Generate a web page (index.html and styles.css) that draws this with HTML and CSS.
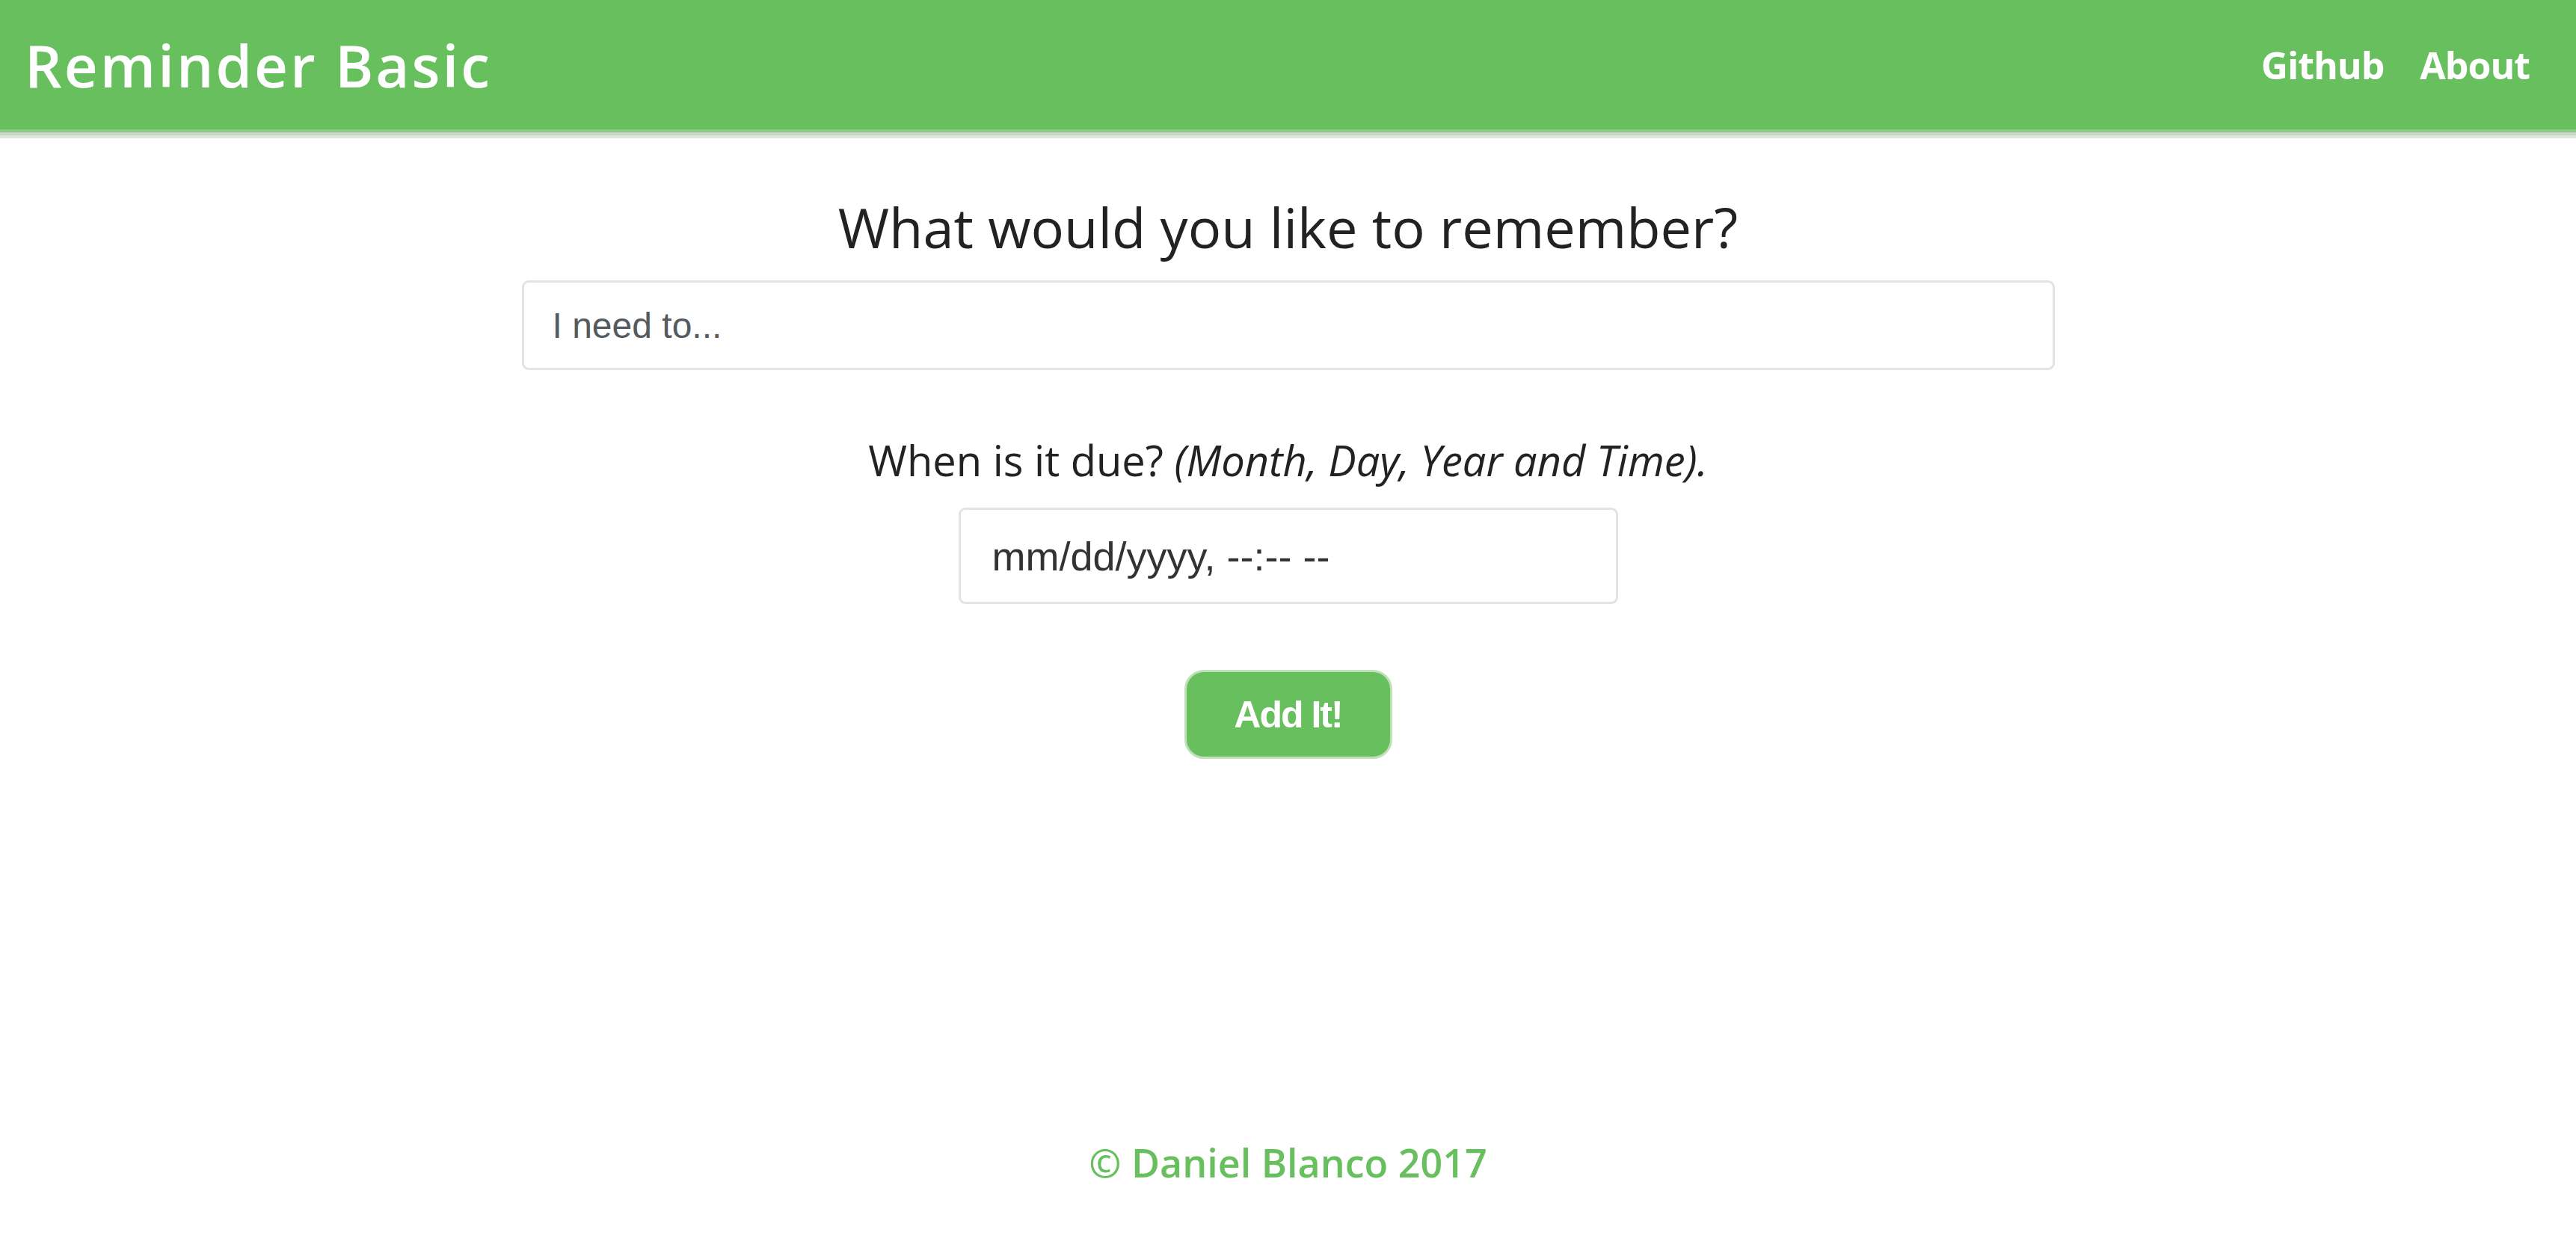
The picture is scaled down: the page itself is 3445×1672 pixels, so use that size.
FILE: index.html
```html
<!DOCTYPE html>
<html lang="en">
<head>
<meta charset="utf-8">
<title>Reminder Basic</title>
<link rel="stylesheet" href="styles.css">
</head>
<body>
<header class="navbar">
  <a class="brand" href="#">Reminder Basic</a>
  <nav class="nav-links">
    <a href="#">Github</a>
    <a href="#">About</a>
  </nav>
</header>
<main class="main">
  <h1 class="title">What would you like to remember?</h1>
  <input class="field field-task" type="text" placeholder="I need to...">
  <p class="due-label">When is it due? <em>(Month, Day, Year and Time).</em></p>
  <input class="field field-date" type="text" placeholder="mm/dd/yyyy, --:-- --">
  <button class="add-btn" type="button">Add It!</button>
</main>
<footer class="footer">© Daniel Blanco 2017</footer>
</body>
</html>
```
FILE: styles.css
```css
html, body {
  margin: 0;
  padding: 0;
  background: #ffffff;
}
body {
  font-family: "Open Sans", "Noto Sans", sans-serif;
  color: #222222;
  min-height: 1672px;
  display: flex;
  flex-direction: column;
}
.navbar {
  height: 173px;
  background: #68bf5e;
  display: flex;
  align-items: center;
  justify-content: space-between;
  padding: 0 62px 0 33px;
  box-shadow: 0 4px 0 #8ccb84, 0 8px 0 #d0d0d0, 0 12px 0 #d9ead6;
  box-sizing: border-box;
  position: relative;
}
.brand {
  color: #ffffff;
  text-decoration: none;
  font-size: 78px;
  font-weight: 600;
  letter-spacing: 3px;
  line-height: 1;
}
.nav-links {
  display: flex;
  gap: 48px;
}
.nav-links a {
  color: #ffffff;
  text-decoration: none;
  font-size: 50px;
  font-weight: 700;
  letter-spacing: -1px;
}
.main {
  display: flex;
  flex-direction: column;
  align-items: center;
  padding-top: 94px;
}
.title {
  margin: 0;
  font-size: 74px;
  font-weight: 400;
  line-height: 1;
  color: #222222;
}
.field {
  box-sizing: border-box;
  border: 3px solid #e2e3e5;
  border-radius: 9px;
  background: #ffffff;
  outline: none;
  font-family: "Liberation Sans", Arial, sans-serif;
}
.field-task {
  margin-top: 34px;
  width: 2050px;
  height: 120px;
  padding: 0 38px;
  font-size: 48px;
}
.field-task::placeholder {
  color: #555a5f;
}
.due-label {
  margin: 92px 0 0;
  font-size: 56px;
  line-height: 1;
  color: #222222;
}
.field-date {
  margin-top: 36px;
  width: 882px;
  height: 129px;
  padding: 0 42px;
  font-size: 54px;
}
.field-date::placeholder {
  color: #333333;
}
.add-btn {
  margin-top: 88px;
  width: 278px;
  height: 119px;
  background: #68bf5e;
  border: 3px solid #bfe0b9;
  border-radius: 26px;
  color: #ffffff;
  font-family: "Liberation Sans", Arial, sans-serif;
  font-weight: 700;
  font-size: 50px;
  letter-spacing: -2px;
  cursor: pointer;
}
.footer {
  margin-top: auto;
  padding-bottom: 82px;
  text-align: center;
  color: #68bf5e;
  font-size: 52px;
  font-weight: 600;
}
```
